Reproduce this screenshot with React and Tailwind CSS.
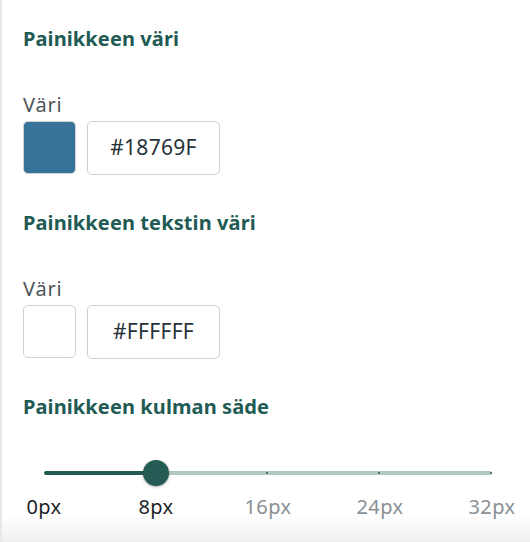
const font = { fontFamily: "'Noto Sans', 'Open Sans', sans-serif" };

function Heading({ children }) {
  return (
    <h2 className="text-[20px] font-bold leading-6 text-[#1f5b54] tracking-[0.1px]">
      {children}
    </h2>
  );
}

function ColorField({ color, value }) {
  return (
    <div className="flex flex-col">
      <span className="mt-[2px] text-[20px] leading-6 text-[#4b5559] tracking-[0.8px]">Väri</span>
      <div className="mt-[4px] flex gap-[11px]">
        <div
          className="h-[53px] w-[53px] rounded-[5px] border border-[#d0d0d0]"
          style={{ backgroundColor: color }}
        />
        <div className="flex h-[54px] w-[133px] items-center justify-center rounded-[5px] border border-[#cfcfcf] text-[21px] text-[#263238] tracking-[0.3px]">
          {value}
        </div>
      </div>
    </div>
  );
}

const stops = ["0px", "8px", "16px", "24px", "32px"];

function RadiusSlider({ value = 1 }) {
  return (
    <div className="ml-[21px] w-[448px]">
      <div className="relative flex h-[26px] items-center">
        <div className="h-[4px] w-[112px] rounded-l-full bg-[#245b54]" />
        <div className="flex h-[4px] flex-1 items-center justify-between rounded-r-full bg-[#b3c8c5]">
          <span />
          {[1, 2, 3].map((i) => (
            <span key={i} className="h-[2px] w-[2px] rounded-full bg-[#245b54]" />
          ))}
        </div>
        <div className="absolute left-[99px] top-0 h-[26px] w-[26px] rounded-full bg-[#245b54] shadow-[0_1px_3px_rgba(0,0,0,0.3)]" />
      </div>
      <div className="-mx-[56px] mt-[9px] flex">
        {stops.map((s, i) => (
          <span
            key={s}
            className={`w-[112px] text-center text-[20px] leading-6 tracking-[0.4px] ${i <= value ? "text-[#1c2529]" : "text-[#8a8f92]"}`}
          >
            {s}
          </span>
        ))}
      </div>
    </div>
  );
}

export default function App() {
  return (
    <div
      style={font}
      className="h-[542px] w-[530px] overflow-hidden border-l-2 border-[#e8e8e8] bg-linear-to-b from-white from-95% to-[#efefef] pl-[21px]"
    >
      <div className="pt-[27px]">
        <Heading>Painikkeen väri</Heading>
      </div>
      <div className="mt-[40px]">
        <ColorField color="#377399" value="#18769F" />
      </div>
      <div className="mt-[36px]">
        <Heading>Painikkeen tekstin väri</Heading>
      </div>
      <div className="mt-[40px]">
        <ColorField color="#ffffff" value="#FFFFFF" />
      </div>
      <div className="mt-[36px]">
        <Heading>Painikkeen kulman säde</Heading>
      </div>
      <div className="mt-[41px]">
        <RadiusSlider value={1} />
      </div>
    </div>
  );
}
